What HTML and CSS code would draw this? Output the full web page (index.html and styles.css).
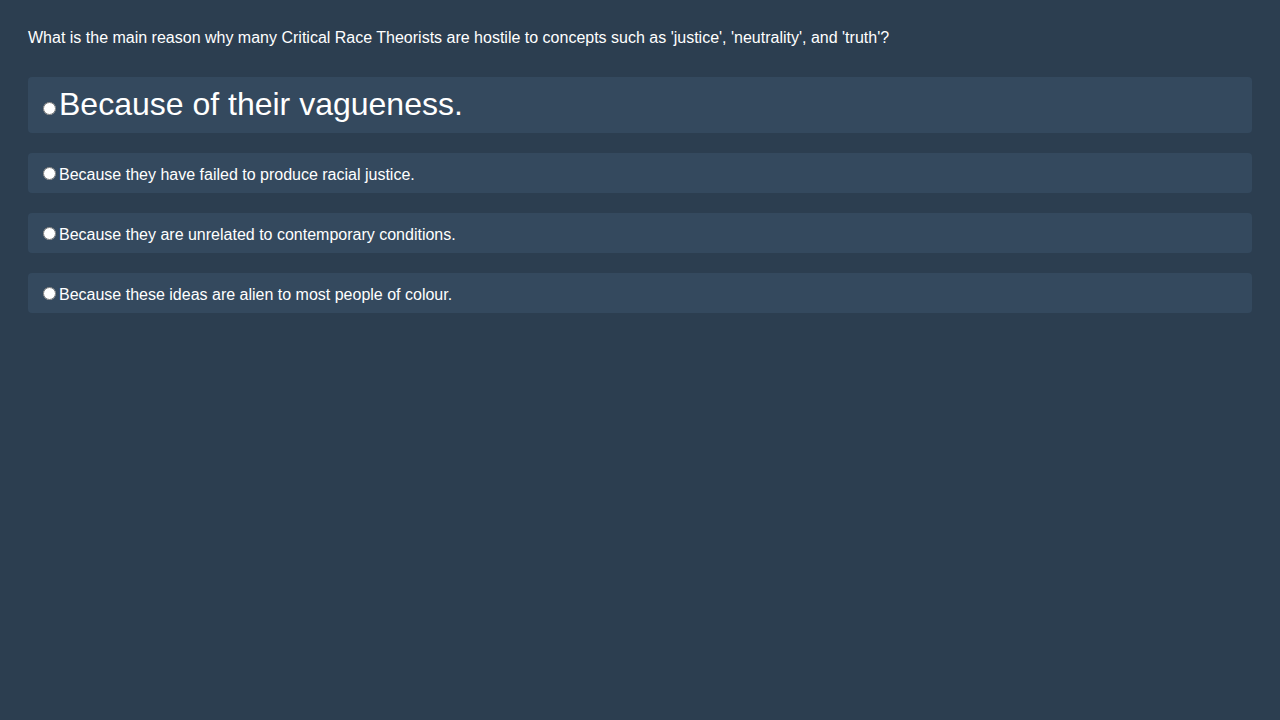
FILE: index.html
```html
<!DOCTYPE html>
<html>
<head>
<meta charset="utf-8">
<link rel="stylesheet" href="styles.css">
</head>
<body>
<div class="quiz">
  <div class="question">What is the main reason why many Critical Race Theorists are hostile to concepts such as 'justice', 'neutrality', and 'truth'?</div>
  <label class="option option-large"><input type="radio" name="q">Because of their vagueness.</label>
  <label class="option"><input type="radio" name="q">Because they have failed to produce racial justice.</label>
  <label class="option"><input type="radio" name="q">Because they are unrelated to contemporary conditions.</label>
  <label class="option"><input type="radio" name="q">Because these ideas are alien to most people of colour.</label>
</div>
</body>
</html>
```
FILE: styles.css
```css
html, body {
  margin: 0;
  padding: 0;
  background: #2c3e50;
}
body {
  font-family: "Liberation Sans", Arial, sans-serif;
  font-size: 16px;
  color: #ffffff;
}
.quiz {
  padding: 29px 28px 28px;
}
.question {
  line-height: 18px;
  margin-bottom: 30px;
}
.option {
  display: block;
  background: #34495e;
  border-radius: 4px;
  padding: 11px 10px 9px;
  line-height: 20px;
  height: 20px;
  margin-bottom: 20px;
}
.option-large {
  font-size: 32px;
  line-height: 36px;
  height: 36px;
  padding: 9px 10px 11px;
}
.option input {
  margin: 3px 3px 0 5px;
}
```
